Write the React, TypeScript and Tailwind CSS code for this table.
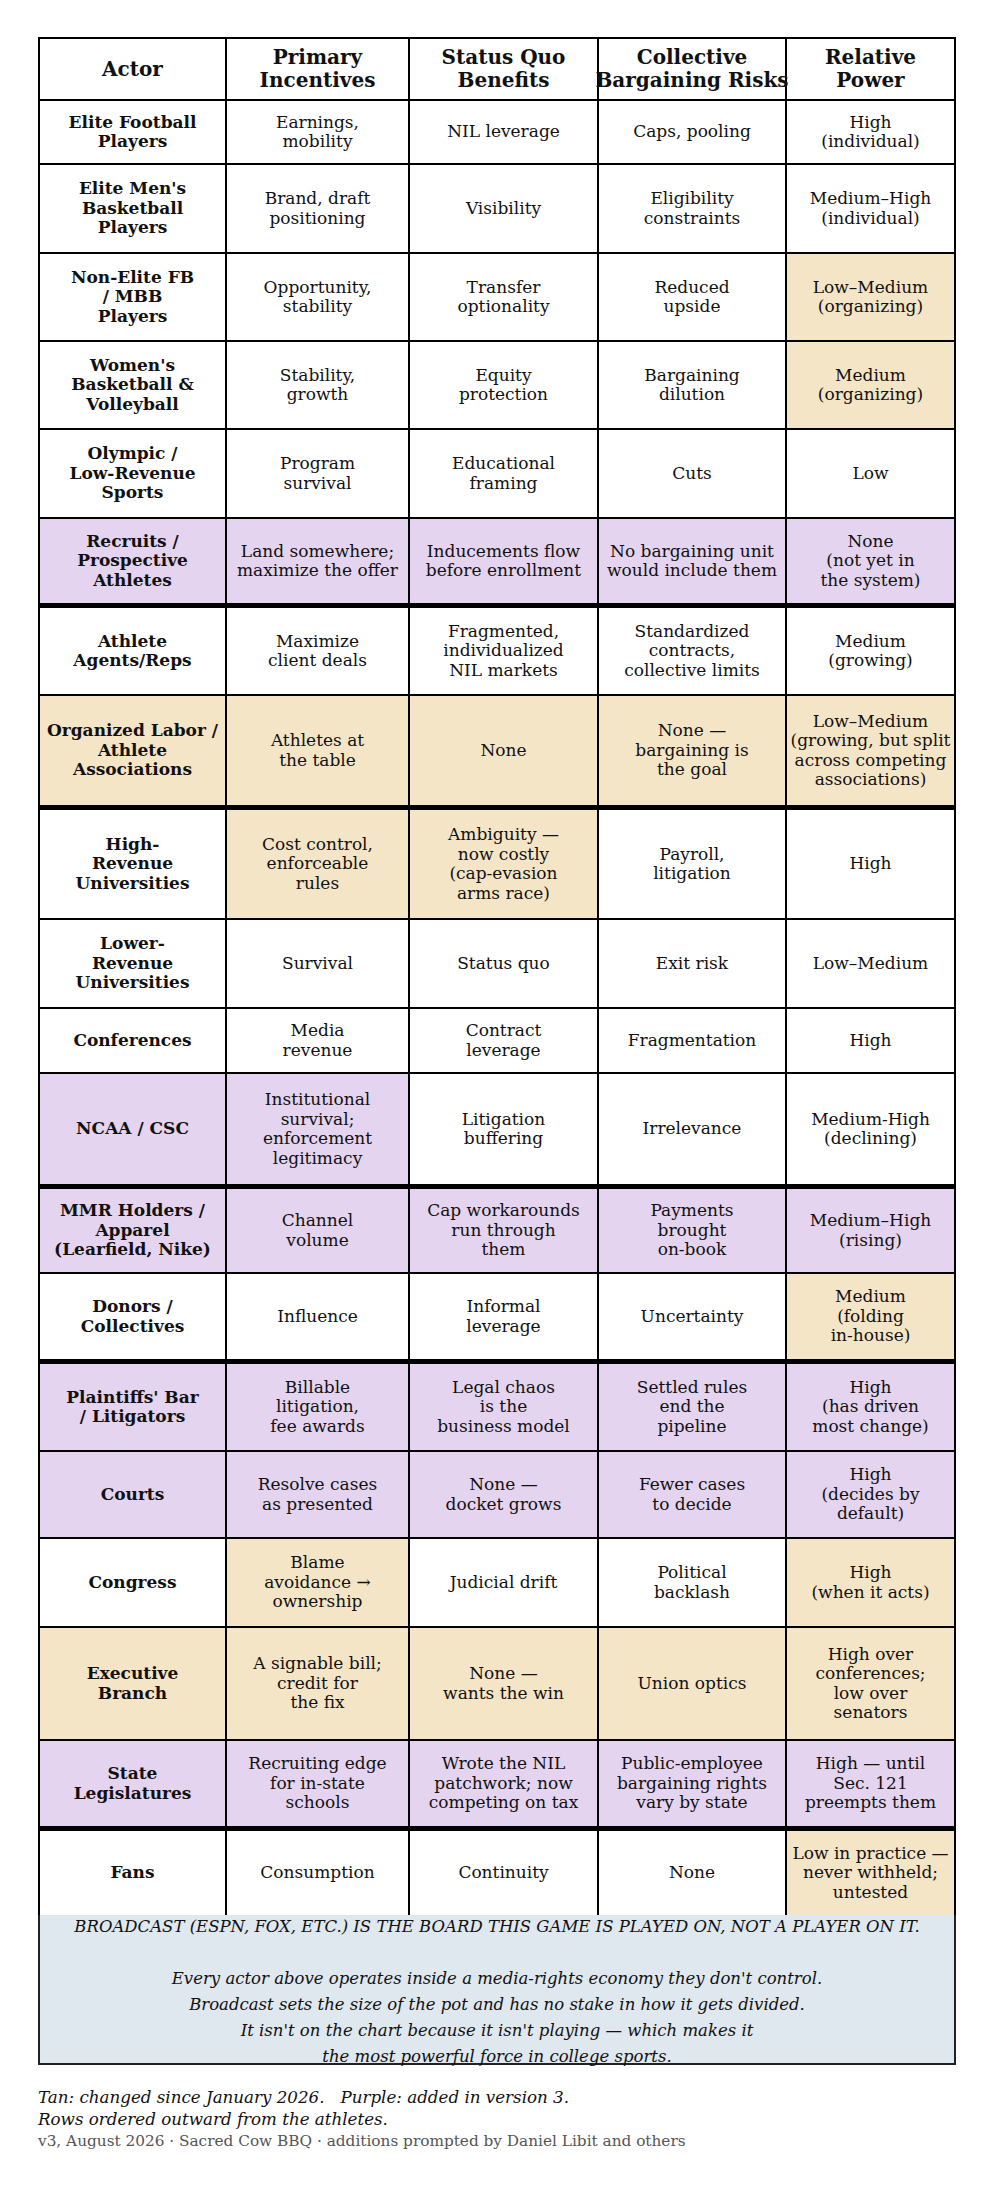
const TAN = "bg-[#f5e5c7]";
const PURPLE = "bg-[#e5d4ef]";

const WIDTHS = ["w-[189px] border-l-2", "w-[183px]", "w-[189px]", "w-[188px]", "w-[169px]"];

type Row = {
  h: string;
  fill: string; // W / T / P per column
  thick?: boolean;
  cells: string[];
};

const ROWS: Row[] = [
  { h: "h-[64px]", fill: "WWWWW", cells: ["Elite Football\nPlayers", "Earnings,\nmobility", "NIL leverage", "Caps, pooling", "High\n(individual)"] },
  { h: "h-[89px]", fill: "WWWWW", cells: ["Elite Men's\nBasketball\nPlayers", "Brand, draft\npositioning", "Visibility", "Eligibility\nconstraints", "Medium–High\n(individual)"] },
  { h: "h-[88px]", fill: "WWWWT", cells: ["Non-Elite FB\n/ MBB\nPlayers", "Opportunity,\nstability", "Transfer\noptionality", "Reduced\nupside", "Low–Medium\n(organizing)"] },
  { h: "h-[88px]", fill: "WWWWT", cells: ["Women's\nBasketball &\nVolleyball", "Stability,\ngrowth", "Equity\nprotection", "Bargaining\ndilution", "Medium\n(organizing)"] },
  { h: "h-[89px]", fill: "WWWWW", cells: ["Olympic /\nLow-Revenue\nSports", "Program\nsurvival", "Educational\nframing", "Cuts", "Low"] },
  { h: "h-[89px]", fill: "PPPPP", thick: true, cells: ["Recruits /\nProspective\nAthletes", "Land somewhere;\nmaximize the offer", "Inducements flow\nbefore enrollment", "No bargaining unit\nwould include them", "None\n(not yet in\nthe system)"] },
  { h: "h-[88px]", fill: "WWWWW", cells: ["Athlete\nAgents/Reps", "Maximize\nclient deals", "Fragmented,\nindividualized\nNIL markets", "Standardized\ncontracts,\ncollective limits", "Medium\n(growing)"] },
  { h: "h-[114px]", fill: "TTTTT", thick: true, cells: ["Organized Labor /\nAthlete\nAssociations", "Athletes at\nthe table", "None", "None —\nbargaining is\nthe goal", "Low–Medium\n(growing, but split\nacross competing\nassociations)"] },
  { h: "h-[110px]", fill: "WTTWW", cells: ["High-\nRevenue\nUniversities", "Cost control,\nenforceable\nrules", "Ambiguity —\nnow costly\n(cap-evasion\narms race)", "Payroll,\nlitigation", "High"] },
  { h: "h-[89px]", fill: "WWWWW", cells: ["Lower-\nRevenue\nUniversities", "Survival", "Status quo", "Exit risk", "Low–Medium"] },
  { h: "h-[65px]", fill: "WWWWW", cells: ["Conferences", "Media\nrevenue", "Contract\nleverage", "Fragmentation", "High"] },
  { h: "h-[115px]", fill: "PPWWW", thick: true, cells: ["NCAA / CSC", "Institutional\nsurvival;\nenforcement\nlegitimacy", "Litigation\nbuffering", "Irrelevance", "Medium-High\n(declining)"] },
  { h: "h-[85px]", fill: "PPPPP", cells: ["MMR Holders /\nApparel\n(Learfield, Nike)", "Channel\nvolume", "Cap workarounds\nrun through\nthem", "Payments\nbrought\non-book", "Medium–High\n(rising)"] },
  { h: "h-[90px]", fill: "WWWWT", thick: true, cells: ["Donors /\nCollectives", "Influence", "Informal\nleverage", "Uncertainty", "Medium\n(folding\nin-house)"] },
  { h: "h-[88px]", fill: "PPPPP", cells: ["Plaintiffs' Bar\n/ Litigators", "Billable\nlitigation,\nfee awards", "Legal chaos\nis the\nbusiness model", "Settled rules\nend the\npipeline", "High\n(has driven\nmost change)"] },
  { h: "h-[87px]", fill: "PPPPP", cells: ["Courts", "Resolve cases\nas presented", "None —\ndocket grows", "Fewer cases\nto decide", "High\n(decides by\ndefault)"] },
  { h: "h-[89px]", fill: "WTWWT", cells: ["Congress", "Blame\navoidance →\nownership", "Judicial drift", "Political\nbacklash", "High\n(when it acts)"] },
  { h: "h-[113px]", fill: "TTTTT", cells: ["Executive\nBranch", "A signable bill;\ncredit for\nthe fix", "None —\nwants the win", "Union optics", "High over\nconferences;\nlow over\nsenators"] },
  { h: "h-[90px]", fill: "PPPPP", thick: true, cells: ["State\nLegislatures", "Recruiting edge\nfor in-state\nschools", "Wrote the NIL\npatchwork; now\ncompeting on tax", "Public-employee\nbargaining rights\nvary by state", "High — until\nSec. 121\npreempts them"] },
  { h: "h-[86px]", fill: "WWWWT", cells: ["Fans", "Consumption", "Continuity", "None", "Low in practice —\nnever withheld;\nuntested"] },
];

const HEADERS = ["Actor", "Primary\nIncentives", "Status Quo\nBenefits", "Collective\nBargaining Risks", "Relative\nPower"];

function bg(c: string) {
  if (c === "T") return TAN;
  if (c === "P") return PURPLE;
  return "bg-white";
}

export default function App() {
  return (
    <div className="min-h-[2190px] w-[993px] bg-white pt-[37px] font-['DejaVu_Serif',serif] text-[#111]">
      <div className="ml-[38px] w-[918px]">
        <div className="flex h-[64px] border-y-2 border-black">
          {HEADERS.map((t, i) => (
            <div
              key={i}
              className={`${WIDTHS[i]} flex items-center justify-center border-r-2 border-black text-center text-[20px] font-bold leading-[23px] whitespace-pre`}
            >
              {t}
            </div>
          ))}
        </div>

        {ROWS.map((r, ri) => (
          <div
            key={ri}
            className={`flex ${r.h} ${r.thick ? "border-b-[5px]" : "border-b-2"} border-black`}
          >
            {r.cells.map((t, i) => (
              <div
                key={i}
                className={`${WIDTHS[i]} ${bg(r.fill[i])} flex items-center justify-center border-r-2 border-black text-center text-[17px] leading-[19.5px] whitespace-pre ${i === 0 ? "font-bold" : ""}`}
              >
                {t}
              </div>
            ))}
          </div>
        ))}

        <div className="h-[151px] border-x-2 border-b-2 border-[#222] bg-[#dfe7ef] text-center text-[16.5px] italic leading-[26px]">
          <p className="-mt-[3px]">
            BROADCAST (ESPN, FOX, ETC.) IS THE BOARD THIS GAME IS PLAYED ON, NOT A PLAYER ON IT.
          </p>
          <p>&nbsp;</p>
          <p>Every actor above operates inside a media-rights economy they don't control.</p>
          <p>Broadcast sets the size of the pot and has no stake in how it gets divided.</p>
          <p>It isn't on the chart because it isn't playing — which makes it</p>
          <p>the most powerful force in college sports.</p>
        </div>

        <div className="mt-[21px] text-[16.7px] italic leading-[22px]">
          <p className="whitespace-pre">Tan: changed since January 2026.   Purple: added in version 3.</p>
          <p>Rows ordered outward from the athletes.</p>
        </div>
        <p className="text-[15.3px] leading-[23px] text-[#555]">
          v3, August 2026 · Sacred Cow BBQ · additions prompted by Daniel Libit and others
        </p>
      </div>
    </div>
  );
}
